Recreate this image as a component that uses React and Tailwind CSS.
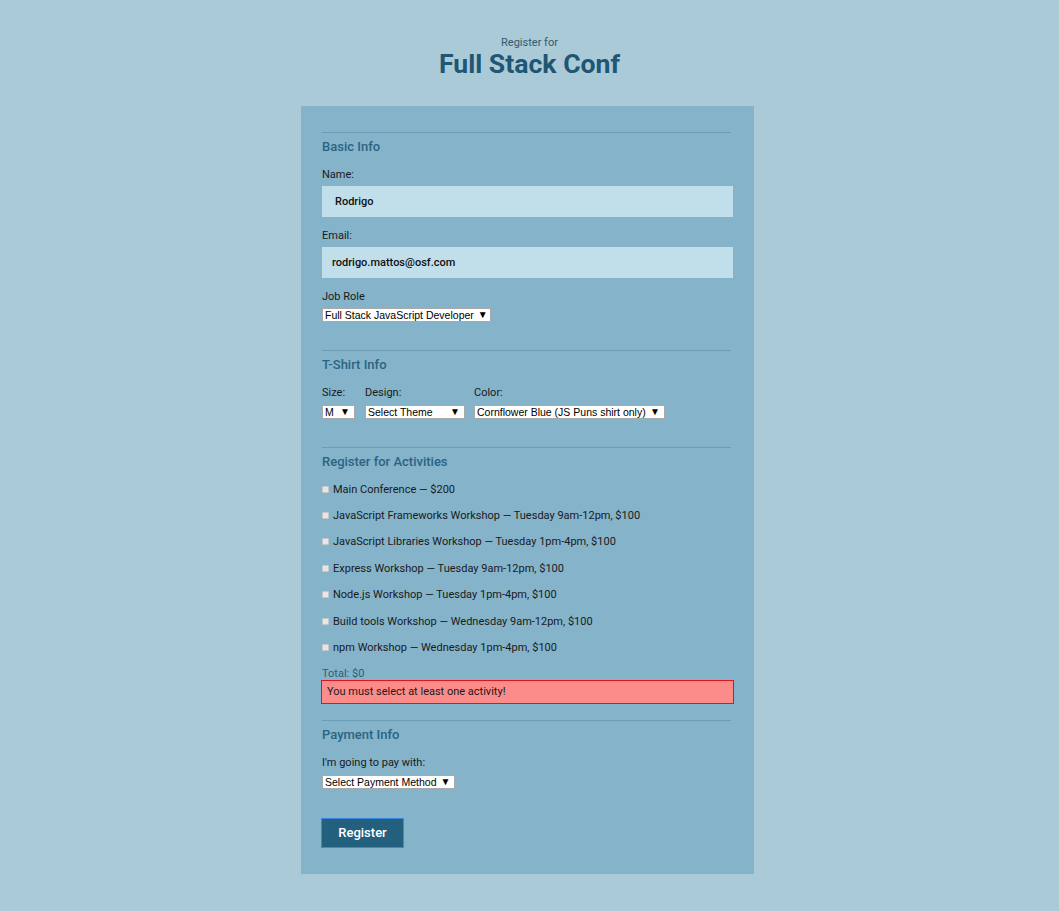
import React from "react";

const Sel = ({ w, children }) => (
  <div
    className={`flex h-[14px] items-center justify-between bg-white border border-[#a9a9a9] pl-[2px] pr-[4px] text-[10.5px] leading-[12px] text-black ${w}`}
    style={{ fontFamily: '"Liberation Sans", Arial, sans-serif' }}
  >
    <span className="whitespace-nowrap">{children}</span>
    <span className="text-[10px] ml-[4px]">▼</span>
  </div>
);

const Heading = ({ children }) => (
  <>
    <div className="h-px w-[409px] bg-[#6a9db6]" />
    <div className="mt-[6px] text-[13px] leading-[16px] font-medium text-[#2b6482]">{children}</div>
  </>
);

const activities = [
  "Main Conference — $200",
  "JavaScript Frameworks Workshop — Tuesday 9am-12pm, $100",
  "JavaScript Libraries Workshop — Tuesday 1pm-4pm, $100",
  "Express Workshop — Tuesday 9am-12pm, $100",
  "Node.js Workshop — Tuesday 1pm-4pm, $100",
  "Build tools Workshop — Wednesday 9am-12pm, $100",
  "npm Workshop — Wednesday 1pm-4pm, $100",
];

export default function App() {
  return (
    <div
      className="min-h-[911px] w-full bg-[#aacad7] flex flex-col items-center pt-[37px] pb-[37px]"
      style={{ fontFamily: "Roboto, 'Noto Sans', sans-serif" }}
    >
      <div className="text-[11px] leading-[12px] text-[#2f5a70]">Register for</div>
      <h1 className="text-[26.6px] leading-[30px] font-bold text-[#1e5674]">Full Stack Conf</h1>

      <div className="mt-[27px] mr-[4px] w-[453px] bg-[#84b3ca] px-[21px] pt-[26px] pb-[26px] text-[11px] leading-[13px] text-[#1a1a1a]">
        <Heading>Basic Info</Heading>
        <div className="mt-[13px]">Name:</div>
        <div className="mt-[5px] h-[31px] w-[411px] bg-[#c1dfea] flex items-center pl-[13px] font-medium text-[#111]">Rodrigo</div>
        <div className="mt-[12px]">Email:</div>
        <div className="mt-[5px] h-[31px] w-[411px] bg-[#c1dfea] flex items-center pl-[10px] font-medium text-[#111]">rodrigo.mattos@osf.com</div>
        <div className="mt-[12px]">Job Role</div>
        <div className="mt-[5px]">
          <Sel w="w-[169px]">Full Stack JavaScript Developer</Sel>
        </div>

        <div className="mt-[28px]">
          <Heading>T-Shirt Info</Heading>
        </div>
        <div className="mt-[13px] flex">
          <div className="flex flex-col w-[43px]">
            <div>Size:</div>
            <div className="mt-[6px]"><Sel w="w-[33px]">M</Sel></div>
          </div>
          <div className="flex flex-col w-[109px]">
            <div>Design:</div>
            <div className="mt-[6px]"><Sel w="w-[100px]">Select Theme</Sel></div>
          </div>
          <div className="flex flex-col">
            <div>Color:</div>
            <div className="mt-[6px]"><Sel w="w-[191px]">Cornflower Blue (JS Puns shirt only)</Sel></div>
          </div>
        </div>

        <div className="mt-[28px]">
          <Heading>Register for Activities</Heading>
        </div>
        <div className="mt-[6px] flex flex-col">
          {activities.map((a) => (
            <div key={a} className="h-[26.4px] flex items-center">
              <span className="w-[7px] h-[7px] bg-[#e6e6e6] border border-[#c8c8c8] rounded-[1px] mr-[4px]" />
              <span>{a}</span>
            </div>
          ))}
        </div>
        <div className="mt-[6px] text-[#2f5d75]">Total: $0</div>
        <div className="h-[24px] w-[413px] -ml-[1px] bg-[#fc8c8a] border border-[#e0141a] flex items-center pl-[5px]">
          You must select at least one activity!
        </div>

        <div className="mt-[16px]">
          <Heading>Payment Info</Heading>
        </div>
        <div className="mt-[13px]">I'm going to pay with:</div>
        <div className="mt-[6px]">
          <Sel w="w-[133px]">Select Payment Method</Sel>
        </div>
        <button className="mt-[29px] -ml-[1px] h-[30px] w-[83px] bg-[#22607e] border border-[#3f86e0] text-white text-[13px] font-medium">
          Register
        </button>
      </div>
    </div>
  );
}
